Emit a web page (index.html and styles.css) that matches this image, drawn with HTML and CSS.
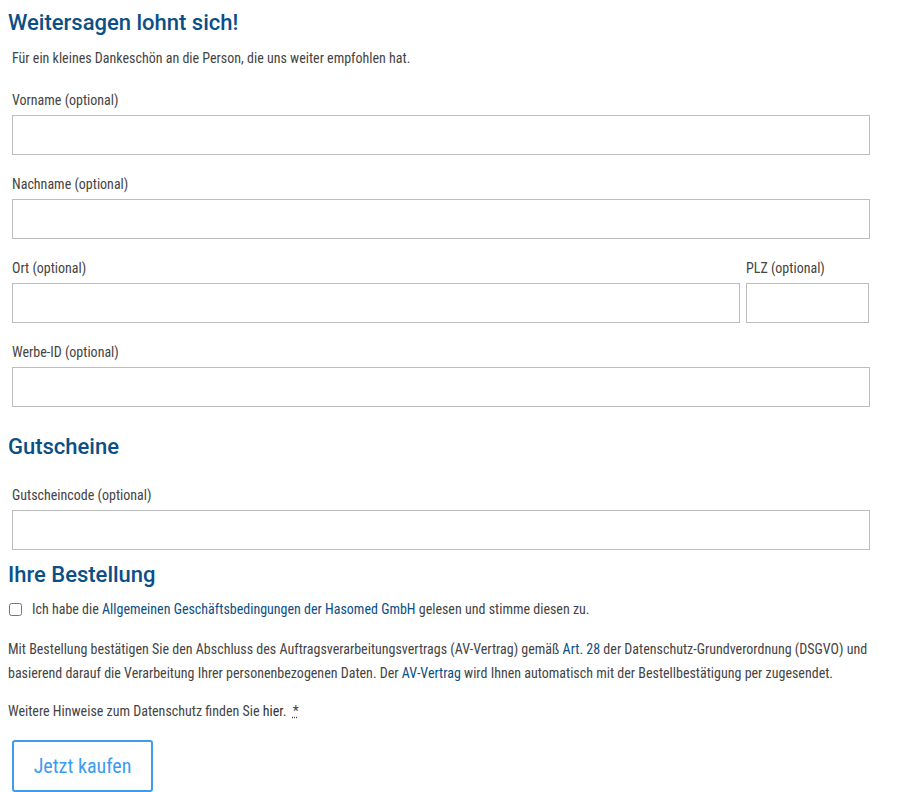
FILE: index.html
```html
<!DOCTYPE html>
<html lang="de">
<head>
<meta charset="utf-8">
<link rel="stylesheet" href="styles.css">
</head>
<body>
<form class="order">
  <h2 class="heading">Weitersagen lohnt sich!</h2>
  <div class="group">
    <p class="intro">Für ein kleines Dankeschön an die Person, die uns weiter empfohlen hat.</p>
    <div class="field">
      <label class="label">Vorname (optional)</label>
      <input class="input" type="text">
    </div>
    <div class="field">
      <label class="label">Nachname (optional)</label>
      <input class="input" type="text">
    </div>
    <div class="row">
      <div class="field grow">
        <label class="label">Ort (optional)</label>
        <input class="input" type="text">
      </div>
      <div class="field plz">
        <label class="label">PLZ (optional)</label>
        <input class="input" type="text">
      </div>
    </div>
    <div class="field">
      <label class="label">Werbe-ID (optional)</label>
      <input class="input" type="text">
    </div>
  </div>
  <h2 class="heading heading-second">Gutscheine</h2>
  <div class="group group-voucher">
    <div class="field field-last">
      <label class="label">Gutscheincode (optional)</label>
      <input class="input" type="text">
    </div>
  </div>
  <h2 class="heading heading-third">Ihre Bestellung</h2>
  <label class="check">
    <input type="checkbox" class="box">
    <span>Ich habe die <a class="link" href="#">Allgemeinen Geschäftsbedingungen der Hasomed GmbH</a> gelesen und stimme diesen zu.</span>
  </label>
  <p class="text">Mit Bestellung bestätigen Sie den Abschluss des Auftragsverarbeitungsvertrags (AV-Vertrag) gemäß <a class="link" href="#">Art. 28</a> der Datenschutz-Grundverordnung (DSGVO) und basierend darauf die Verarbeitung Ihrer personenbezogenen Daten. Der <a class="link" href="#">AV-Vertrag</a> wird Ihnen automatisch mit der Bestellbestätigung per zugesendet.</p>
  <p class="text hint">Weitere Hinweise zum Datenschutz finden Sie <a class="link link-dark" href="#">hier</a>.&nbsp; <abbr class="req" title="Pflichtfeld">*</abbr></p>
  <div class="actions">
    <button type="button" class="buy">Jetzt kaufen</button>
  </div>
</form>
</body>
</html>
```
FILE: styles.css
```css
html, body {
  margin: 0;
  background: #ffffff;
}
body {
  padding: 0 8px;
  font-family: Roboto, "Liberation Sans", sans-serif;
  font-stretch: 75%;
  color: #444444;
  font-size: 14px;
}
.order {
  width: 862px;
}
.heading {
  margin: 0;
  padding-top: 10px;
  font-size: 22px;
  line-height: 26px;
  font-weight: 500;
  font-stretch: 100%;
  color: #0a4f86;
}
.heading-second {
  padding-top: 8px;
}
.heading-third {
  padding-top: 12px;
}
.group {
  padding: 0 0 0 4px;
}
.group-voucher {
  padding-top: 25px;
}
.intro {
  margin: 12px 0 22px;
  font-size: 14px;
  line-height: 20px;
}
.field {
  display: flex;
  flex-direction: column;
  margin-bottom: 19px;
}
.field-last {
  margin-bottom: 0;
}
.label {
  font-size: 14px;
  line-height: 20px;
  margin-bottom: 5px;
}
.input {
  box-sizing: border-box;
  height: 40px;
  width: 858px;
  margin: 0;
  border: 1px solid #bdbdbd;
  border-radius: 0;
  background: #fff;
}
.row {
  display: flex;
  gap: 6px;
}
.grow .input {
  width: 728px;
}
.plz .input {
  width: 123px;
}
.check {
  display: flex;
  align-items: center;
  gap: 10px;
  margin-top: 11px;
  font-size: 14px;
  line-height: 20px;
}
.box {
  margin: 0 0 0 1px;
  width: 13px;
  height: 13px;
}
.link {
  color: #0a4f86;
  text-decoration: none;
}
.link-dark {
  color: #333333;
}
.text {
  margin: 18px 0 0;
  font-size: 14px;
  line-height: 24px;
}
.hint {
  margin-top: 14px;
}
.req {
  text-decoration: underline dotted;
  color: #444;
}
.actions {
  padding: 17px 0 0 4px;
}
.buy {
  box-sizing: border-box;
  width: 141px;
  height: 52px;
  padding-bottom: 2px;
  border: 2px solid #3d9bf0;
  border-radius: 3px;
  background: #fff;
  color: #3d9bf0;
  font-family: Roboto, "Liberation Sans", sans-serif;
  font-stretch: 75%;
  font-size: 20px;
}
```
